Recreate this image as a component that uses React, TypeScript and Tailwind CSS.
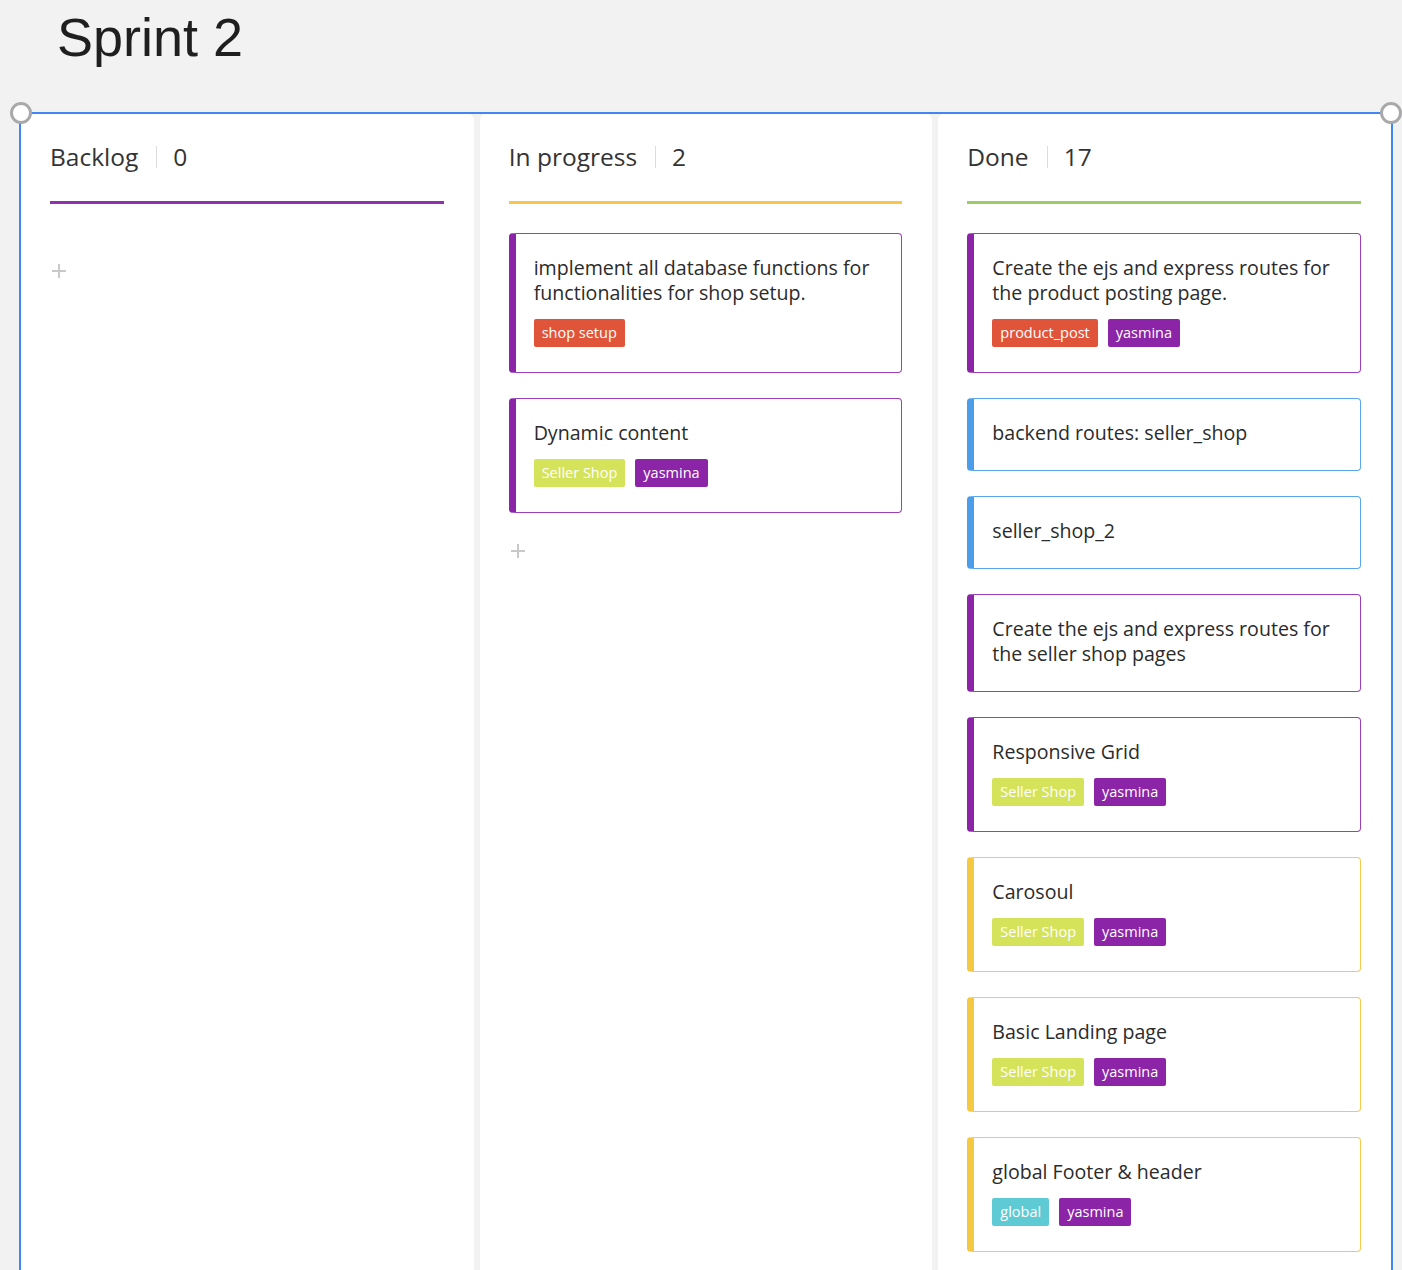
import React from "react";

type Tag = { label: string; tone: "orange" | "purple" | "lime" | "cyan" };
type Card = { title: string; accent: "purple" | "blue" | "yellow"; tags: Tag[] };
type Column = { name: string; count: number; line: string; cards: Card[] };

const tagClass: Record<Tag["tone"], string> = {
  orange: "bg-[#e0553a]",
  purple: "bg-[#8b24a6]",
  lime: "bg-[#d5e35b]",
  cyan: "bg-[#5ecbd4]",
};

const cardClass: Record<Card["accent"], string> = {
  purple: "border-[#9d3fb9] border-l-[#8b24a6]",
  blue: "border-[#59a6ee] border-l-[#4c9de9]",
  yellow: "border-[#f6ca4c] border-l-[#f5c842]",
};

const seller: Tag[] = [
  { label: "Seller Shop", tone: "lime" },
  { label: "yasmina", tone: "purple" },
];

const columns: Column[] = [
  { name: "Backlog", count: 0, line: "bg-[#9231ad]", cards: [] },
  {
    name: "In progress",
    count: 2,
    line: "bg-[#f7c847]",
    cards: [
      {
        title: "implement all database functions for functionalities for shop setup.",
        accent: "purple",
        tags: [{ label: "shop setup", tone: "orange" }],
      },
      { title: "Dynamic content", accent: "purple", tags: seller },
    ],
  },
  {
    name: "Done",
    count: 17,
    line: "bg-[#9ccc65]",
    cards: [
      {
        title: "Create the ejs and express routes for the product posting page.",
        accent: "purple",
        tags: [
          { label: "product_post", tone: "orange" },
          { label: "yasmina", tone: "purple" },
        ],
      },
      { title: "backend routes: seller_shop", accent: "blue", tags: [] },
      { title: "seller_shop_2", accent: "blue", tags: [] },
      {
        title: "Create the ejs and express routes for the seller shop pages",
        accent: "purple",
        tags: [],
      },
      { title: "Responsive Grid", accent: "purple", tags: seller },
      { title: "Carosoul", accent: "yellow", tags: seller },
      { title: "Basic Landing page", accent: "yellow", tags: seller },
      {
        title: "global Footer & header",
        accent: "yellow",
        tags: [
          { label: "global", tone: "cyan" },
          { label: "yasmina", tone: "purple" },
        ],
      },
    ],
  },
];

function Plus() {
  return (
    <svg width="14" height="14" viewBox="0 0 14 14" className="ml-[2px]">
      <path d="M7 0v14M0 7h14" stroke="#c9c9c9" strokeWidth="2" />
    </svg>
  );
}

function Handle({ side }: { side: "left" | "right" }) {
  return (
    <div
      className={`absolute -top-[12px] w-[22px] h-[22px] rounded-full border-[3px] border-[#a9a9a9] bg-white ${side === "left" ? "-left-[11px]" : "-right-[11px]"}`}
    />
  );
}

export default function App() {
  return (
    <div
      className="h-[1270px] overflow-hidden bg-[#f2f2f2] flex flex-col"
      style={{ fontFamily: "'Open Sans', 'Noto Sans', sans-serif" }}
    >
      <div className="h-[112px] shrink-0 pl-[57px] pt-[10px]">
        <h1
          className="text-[54px] leading-none text-[#1f1f1f]"
          style={{ fontFamily: "'Liberation Sans', Arial, sans-serif" }}
        >
          Sprint 2
        </h1>
      </div>
      <div className="relative flex-1 ml-[19px] w-[1374px] border-t-2 border-x-2 border-[#4285f4]">
        <Handle side="left" />
        <Handle side="right" />
        <div className="grid grid-cols-3 gap-[6px] h-full">
          {columns.map((col) => (
            <div key={col.name} className="bg-white rounded-t-[6px] pl-[29px] pr-[30px] pt-[26px]">
              <div className="flex items-center h-[34px] text-[24.5px] text-[#333]">
                <span>{col.name}</span>
                <span className="w-px h-[22px] bg-[#dcdcdc] ml-[18px] mr-[16px]" />
                <span>{col.count}</span>
              </div>
              <div className={`h-[3px] mt-[27px] ${col.line}`} />
              <div className="flex flex-col gap-[25px] mt-[29px]">
                {col.cards.map((card, i) => (
                  <div
                    key={i}
                    className={`border border-l-[7px] rounded-[4px] pl-[18px] pr-[20px] pt-[21px] pb-[25px] ${cardClass[card.accent]}`}
                  >
                    <div className="text-[19.6px] leading-[25px] text-[#2b2b2b]">{card.title}</div>
                    {card.tags.length > 0 && (
                      <div className="flex gap-[10px] mt-[14px]">
                        {card.tags.map((t) => (
                          <span
                            key={t.label}
                            className={`h-[28px] leading-[28px] px-[8px] rounded-[2px] text-[14.5px] text-white ${tagClass[t.tone]}`}
                          >
                            {t.label}
                          </span>
                        ))}
                      </div>
                    )}
                  </div>
                ))}
              </div>
              <div className="h-[26px] mt-[25px] flex items-center">
                <Plus />
              </div>
            </div>
          ))}
        </div>
      </div>
    </div>
  );
}
